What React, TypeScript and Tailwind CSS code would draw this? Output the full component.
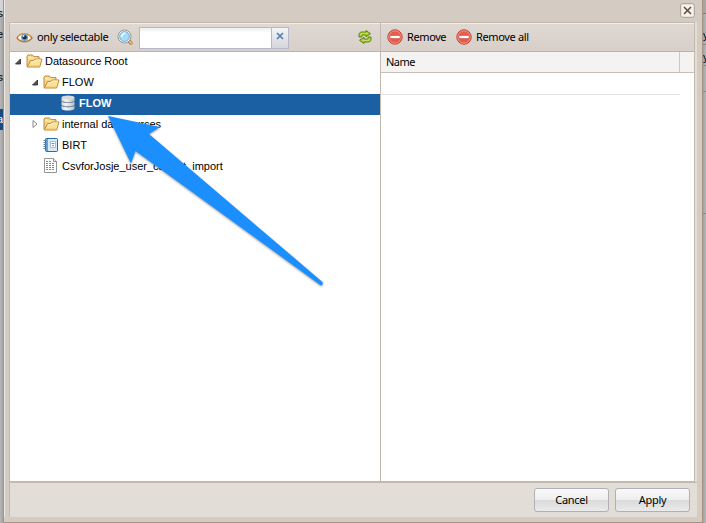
import type { ReactNode } from "react";

const SANS = "font-['Liberation_Sans',Arial,sans-serif]";
const HUMAN = "font-['Noto_Sans',sans-serif]";

function Folder() {
  return (
    <svg width="17" height="16" viewBox="0 0 17 16" className="shrink-0">
      <path d="M1 13.5V3l1-1h4.5l1.3 1.6H13v4" fill="#f3d385" stroke="#c08c3c" />
      <path d="M2 5h9M2 4h3" stroke="#fff0b4" />
      <path d="M1.2 14 4.6 7.5h3L9 6h7l-2.3 8H1.2Z" fill="#fbe09a" stroke="#c08c3c" strokeLinejoin="round" />
      <path d="M5.2 8.6h3L9.6 7h5" fill="none" stroke="#fff3c8" />
      <path d="M3 12.5h10" stroke="#f6d17a" />
    </svg>
  );
}

function Database() {
  return (
    <svg width="16" height="16" viewBox="0 0 16 16" className="shrink-0">
      <defs>
        <linearGradient id="metal"><stop stopColor="#d2d4d6" /><stop offset=".35" stopColor="#f4f5f6" /><stop offset="1" stopColor="#bcbec1" /></linearGradient>
      </defs>
      <path d="M1.500 10.800v2.600c0 2.800 13 2.800 13 0v-2.600c-2 1.800-11 1.800-13 0Z" fill="url(#metal)" />
      <path d="M1.500 6.500v3.200c0 2.400 13 2.400 13 0V6.500c-2 1.800-11 1.800-13 0Z" fill="url(#metal)" />
      <path d="M1.500 2.400v3.200c0 2.400 13 2.400 13 0V2.400Z" fill="url(#metal)" />
      <path d="M2 6.300c2 1.600 10 1.600 12 0M2 10.500c2 1.600 10 1.600 12 0" fill="none" stroke="#8d9299" strokeWidth=".8" />
      <ellipse cx="8" cy="2.4" rx="6.5" ry="2" fill="#d9dadb" />
    </svg>
  );
}

function Notebook() {
  return (
    <svg width="16" height="16" viewBox="0 0 16 16" className="shrink-0">
      <rect x="2.5" y="1.5" width="12" height="13" rx="1" fill="#6ba3d0" stroke="#2c6b9f" />
      <path d="M5 2h9v12H5z" fill="#d7eafa" />
      <path d="M7.5 4.5h5v6h-5z" fill="#fff" stroke="#9dbfdc" />
      <path d="M8.500 6.500h3M9 8.500h2" stroke="#6d94b6" />
      <path d="M.5 3.5h3M.5 5.5h3M.5 7.5h3M.5 9.5h3M.5 11.5h3" stroke="#5583a8" />
    </svg>
  );
}

function Sheet() {
  return (
    <svg width="16" height="16" viewBox="0 0 16 16" className="shrink-0">
      <path d="M1.5.5h9l3 3v11h-12z" fill="#fff" stroke="#959595" />
      <path d="M10.5.5v3h3" fill="#e8e8e8" stroke="#959595" />
      <path d="M3 3.5h6M3 5.5h9M3 7.5h9M3 9.5h9M3 11.5h9" stroke="#888" strokeDasharray="2 1" />
    </svg>
  );
}

function Eye() {
  return (
    <svg width="17" height="16" viewBox="0 0 17 16" className="shrink-0">
      <path d="M1 8C4 2.5 12 2 16 8c-4 5-11 5-15 0Z" fill="#fff" stroke="#b77b38" strokeWidth="1.4" />
      <path d="M2 6.8C6 2.3 11 2.5 15 6.4" fill="none" stroke="#dfaa63" />
      <circle cx="8.6" cy="7.4" r="3.5" fill="#6d9abd" />
      <circle cx="8.6" cy="7.2" r="2" fill="#17283b" />
      <circle cx="7.6" cy="6" r=".9" fill="#dbeaf5" />
    </svg>
  );
}

function Magnifier() {
  return (
    <svg width="17" height="17" viewBox="0 0 17 17" className="shrink-0">
      <path d="m12 12 2 2" stroke="#9b7a53" strokeWidth="3.6" strokeLinecap="round" />
      <path d="m13 12.8 1.3 1.3" stroke="#efb65a" strokeWidth="2.2" strokeLinecap="round" />
      <circle cx="7.5" cy="7.5" r="6.5" fill="#fff" stroke="#91979e" />
      <circle cx="7.5" cy="7.5" r="4.9" fill="#a7dcf8" stroke="#6fa9d4" />
      <path d="M4.7 7.9c0-2.2 1.3-3.6 3.6-3.7" fill="none" stroke="#e5f7ff" strokeWidth="1.7" />
    </svg>
  );
}

function Refresh() {
  return (
    <svg width="14" height="14" viewBox="0 0 14 14" className="shrink-0">
      <g fill="#a9cf29" stroke="#55790d" strokeWidth=".9" strokeLinejoin="round">
        <path d="M1 7V5c0-2 1-3 3-3h4V.5L12.5 3.7 8 6.8V5H5C4 5 3.8 5.3 3.8 7Z" />
        <path d="M13 7v2c0 2-1 3-3 3H6v1.5L1.5 10.3 6 7.2V9h3c1 0 1.2-.3 1.2-2Z" />
      </g>
      <path d="M2.4 5.2c.2-1.3.8-1.8 2-1.8h5M11.7 8.6c-.2 1.3-.8 1.8-2 1.8h-5" stroke="#d6eb67" strokeWidth=".8" fill="none" />
    </svg>
  );
}

function Stop() {
  return (
    <svg width="16" height="16" viewBox="0 0 16 16" className="-mt-px shrink-0">
      <circle cx="8" cy="8" r="7.2" fill="#e65b49" stroke="#bf3e36" />
      <circle cx="8" cy="8" r="6.2" fill="none" stroke="#f09a89" />
      <path d="M3 6.5h10v3H3z" fill="#fff" stroke="#c94d42" strokeWidth=".6" />
    </svg>
  );
}

function Twisty({ open }: { open: boolean }) {
  return (
    <svg width="16" height="16" viewBox="0 0 16 16" className="shrink-0">
      {open ? <path d="M10.5 6v5h-5Z" fill="#555" stroke="#222" strokeWidth=".8" /> : <path d="M6 4.5v7L10 8Z" fill="#fff" stroke="#888" />}
    </svg>
  );
}

function Row({ pad, open, icon, label, selected = false }: { pad: string; open?: boolean; icon: ReactNode; label: string; selected?: boolean }) {
  return (
    <div className={`flex h-[21px] items-start pt-px ${pad} ${selected ? "bg-[#1b60a2] font-bold text-white" : "text-black"}`}>
      {open !== undefined && <Twisty open={open} />}
      <div className="w-[17px] shrink-0">{icon}</div>
      <span className="ml-[2px] leading-[17px] whitespace-nowrap">{label}</span>
    </div>
  );
}

const BAR = "flex h-[29px] shrink-0 items-center border-t border-b border-t-[#f3efec] border-b-[#bfb2a6] bg-linear-to-b from-[#dfd8d3] to-[#d8cfc9]";
const BUTTON = "flex h-6 w-[75px] items-center justify-center rounded-[3px] border border-[#aeb0b5] bg-[linear-gradient(#fafafa_0%,#eeeeee_48%,#dadada_50%,#eaeaea_100%)]";

export default function App() {
  return (
    <div className={`relative flex h-[523px] w-[706px] overflow-hidden bg-[#bab8b7] text-[11px] text-black ${SANS}`}>
      <div className="relative w-[3px] shrink-0 overflow-hidden bg-linear-to-r from-[#b6b6b6] to-[#a4a4a4]">
        <div className="h-[14px] bg-[#d4d4d4]" />
        <span className="absolute top-[6px] right-0 text-[11px] leading-[14px]">s</span>
        <span className="absolute top-[27px] right-0 text-[11px] leading-[14px]">e</span>
        <span className="absolute top-[70px] right-0 text-[11px] leading-[14px]">s</span>
        <div className="absolute top-[109px] left-0 h-[21px] w-[3px] bg-[#164c83]" />
        <span className="absolute top-[112px] right-0 text-[11px] leading-[14px] text-white">a</span>
      </div>

      <div className="flex w-[700px] shrink-0 flex-col border-x border-b border-[#a49283] bg-[#d4cbc2] pb-[5px]">
        <header className="flex h-[22px] shrink-0 items-start justify-end border-l border-[#eee9e5] pt-[3px] pr-[7px]">
          <svg width="15" height="15" viewBox="0 0 15 15">
            <rect x=".7" y=".7" width="13.6" height="13.6" rx="2" fill="#f5f1ed" stroke="#a99d92" />
            <path d="m4 4 7 7M11 4l-7 7" stroke="#5c4a3b" strokeWidth="1.5" />
          </svg>
        </header>
        <div className="flex min-h-0 flex-1 border-l border-[#eee9e5] pr-[5px] pl-1">
          <div className="flex min-w-0 flex-1 flex-col bg-[#e3ddd8]">
            <div className="flex h-[460px] w-[686px] border border-[#c5b9ae] bg-white">
              <section className="flex w-[371px] flex-col border-r border-[#c5b9ae]">
                <div className={`${BAR} pr-2 pl-[6px]`}>
                  <Eye />
                  <span className={`ml-[4px] w-[72px] tracking-[-0.35px] whitespace-nowrap ${HUMAN}`}>only selectable</span>
                  <div className="ml-[8px] flex items-center">
                    <Magnifier />
                    <div className="ml-[5px] flex h-[22px] w-[150px] border border-[#b5b8c8] bg-[linear-gradient(#eeeeee,#ffffff_5px)]">
                      <div className="flex-1" />
                      <div className="flex w-[17px] items-center justify-center border-l border-[#b5b8c8] bg-linear-to-b from-[#f4f5f7] to-[#d3d6dc]">
                        <svg width="8" height="8" viewBox="0 0 8 8" className="-mt-[3px]"><path d="m1 1 6 6M7 1 1 7" stroke="#537fae" strokeWidth="1.7" /></svg>
                      </div>
                    </div>
                  </div>
                  <div className="ml-auto pb-px"><Refresh /></div>
                </div>
                <div className="flex flex-col">
                  <Row pad="" open icon={<Folder />} label="Datasource Root" />
                  <Row pad="pl-[17px]" open icon={<Folder />} label="FLOW" />
                  <Row pad="pl-[50px]" icon={<Database />} label="FLOW" selected />
                  <Row pad="pl-[17px]" open={false} icon={<Folder />} label="internal datasources" />
                  <Row pad="pl-[33px]" icon={<Notebook />} label="BIRT" />
                  <Row pad="pl-[33px]" icon={<Sheet />} label="CsvforJosje_user_cannot_import" />
                </div>
              </section>
              <section className="flex min-w-0 flex-1 flex-col">
                <div className={`${BAR} pl-[6px] ${HUMAN}`}>
                  <Stop /><span className="ml-[4px] w-[39px] tracking-[-0.4px] whitespace-nowrap">Remove</span>
                  <div className="ml-[10px] flex items-center"><Stop /><span className="ml-[4px] tracking-[-0.35px] whitespace-nowrap">Remove all</span></div>
                </div>
                <div className="flex h-[21px] items-center border-b border-[#c9bfb6] bg-[#f4f3f2]">
                  <span className={`h-full w-[299px] border-r border-[#c9c9c9] pl-[5px] tracking-[-0.5px] leading-[20px] ${HUMAN}`}>Name</span>
                </div>
                <div className="h-[22px] w-[299px] border-b border-[#e4e4e4]" />
              </section>
            </div>
            <footer className={`flex flex-1 items-center justify-end gap-[6px] border-t border-l border-[#c5b9ae] pr-[7px] ${HUMAN}`}>
              <button className={`${BUTTON} tracking-[-0.3px]`}>Cancel</button>
              <button className={`${BUTTON} tracking-[-0.3px]`}>Apply</button>
            </footer>
          </div>
        </div>
      </div>

      <div className="relative flex-1 overflow-hidden bg-linear-to-r from-[#a3a1a0] to-[#bab8b7]">
        <div className="h-[14px] border-b border-[#817b77] bg-[#aaa39f]" />
        <div className="h-[31px] border-b border-[#8f8b88]" />
        <div className="h-[21px] border-b border-[#8f8b88]" />
        <div className="h-[26px] border-b border-[#8f8b88]" />
        <span className="absolute top-[28px] left-0 text-[11px] leading-[14px]">y</span>
        <span className="absolute top-[50px] left-0 text-[11px] leading-[14px]">y</span>
        <div className="absolute top-[213px] left-0 h-px w-[3px] bg-[#8f8b88]" />
      </div>

      <svg className="pointer-events-none absolute inset-0 drop-shadow-[0_1px_1px_rgba(0,0,0,0.4)]" width="706" height="523" viewBox="0 0 706 523">
        <path d="M108 116 160 127 149 134 322.5 282Q323.5 285 321 285.5L135.5 151 131 163.5Z" fill="#1c8fff" />
      </svg>
    </div>
  );
}
